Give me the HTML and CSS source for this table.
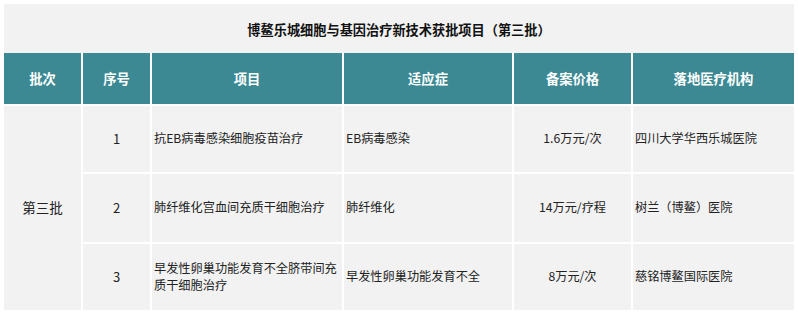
FILE: index.html
```html
<!DOCTYPE html>
<html lang="zh-CN">
<head>
<meta charset="utf-8">
<title>博鳌乐城细胞与基因治疗新技术获批项目（第三批）</title>
<link rel="stylesheet" href="styles.css">
</head>
<body>
<div class="panel">
  <div class="title">博鳌乐城细胞与基因治疗新技术获批项目（第三批）</div>
  <div class="grid">
    <div class="th">批次</div>
    <div class="th">序号</div>
    <div class="th">项目</div>
    <div class="th">适应症</div>
    <div class="th">备案价格</div>
    <div class="th">落地医疗机构</div>

    <div class="td batch">第三批</div>
    <div class="td center num">1</div>
    <div class="td left">抗EB病毒感染细胞疫苗治疗</div>
    <div class="td left">EB病毒感染</div>
    <div class="td center">1.6万元/次</div>
    <div class="td left">四川大学华西乐城医院</div>

    <div class="td center num">2</div>
    <div class="td left">肺纤维化宫血间充质干细胞治疗</div>
    <div class="td left">肺纤维化</div>
    <div class="td center">14万元/疗程</div>
    <div class="td left">树兰（博鳌）医院</div>

    <div class="td center num">3</div>
    <div class="td left">早发性卵巢功能发育不全脐带间充质干细胞治疗</div>
    <div class="td left">早发性卵巢功能发育不全</div>
    <div class="td center">8万元/次</div>
    <div class="td left">慈铭博鳌国际医院</div>
  </div>
</div>
</body>
</html>
```

FILE: styles.css
```css
html, body {
  margin: 0;
  padding: 0;
  background: #ffffff;
}
body {
  padding: 4px;
  font-family: "Noto Sans", "Noto Sans CJK SC", sans-serif;
  color: #222222;
}
.panel {
  width: 790px;
  height: 306px;
  background: #ffffff;
  display: flex;
  flex-direction: column;
}
.title {
  height: 49px;
  background: #f2f2f2;
  display: flex;
  align-items: center;
  justify-content: center;
  font-family: "Noto Sans CJK SC", sans-serif;
  font-weight: 700;
  font-size: 13.2px;
  color: #111111;
  padding-top: 2px;
  box-sizing: border-box;
}
.grid {
  display: grid;
  grid-template-columns: 77px 67px 190px 168px 117px 161px;
  grid-template-rows: 51px 66px 68px 66px;
  column-gap: 2px;
  row-gap: 2px;
  background: #ffffff;
}
.th {
  background: #3c8994;
  color: #ffffff;
  font-family: "Noto Sans CJK SC", sans-serif;
  font-weight: 700;
  font-size: 13.3px;
  display: flex;
  align-items: center;
  justify-content: center;
}
.td {
  background: #f2f2f2;
  font-family: "Noto Sans CJK SC", sans-serif;
  font-size: 12.2px;
  line-height: 17.5px;
  display: flex;
  align-items: center;
}
.center {
  justify-content: center;
}
.num {
  font-size: 13px;
}
.left {
  justify-content: flex-start;
  padding: 0 4px 0 2px;
}
.batch {
  grid-row: span 3;
  justify-content: center;
  font-size: 13.5px;
}
```
